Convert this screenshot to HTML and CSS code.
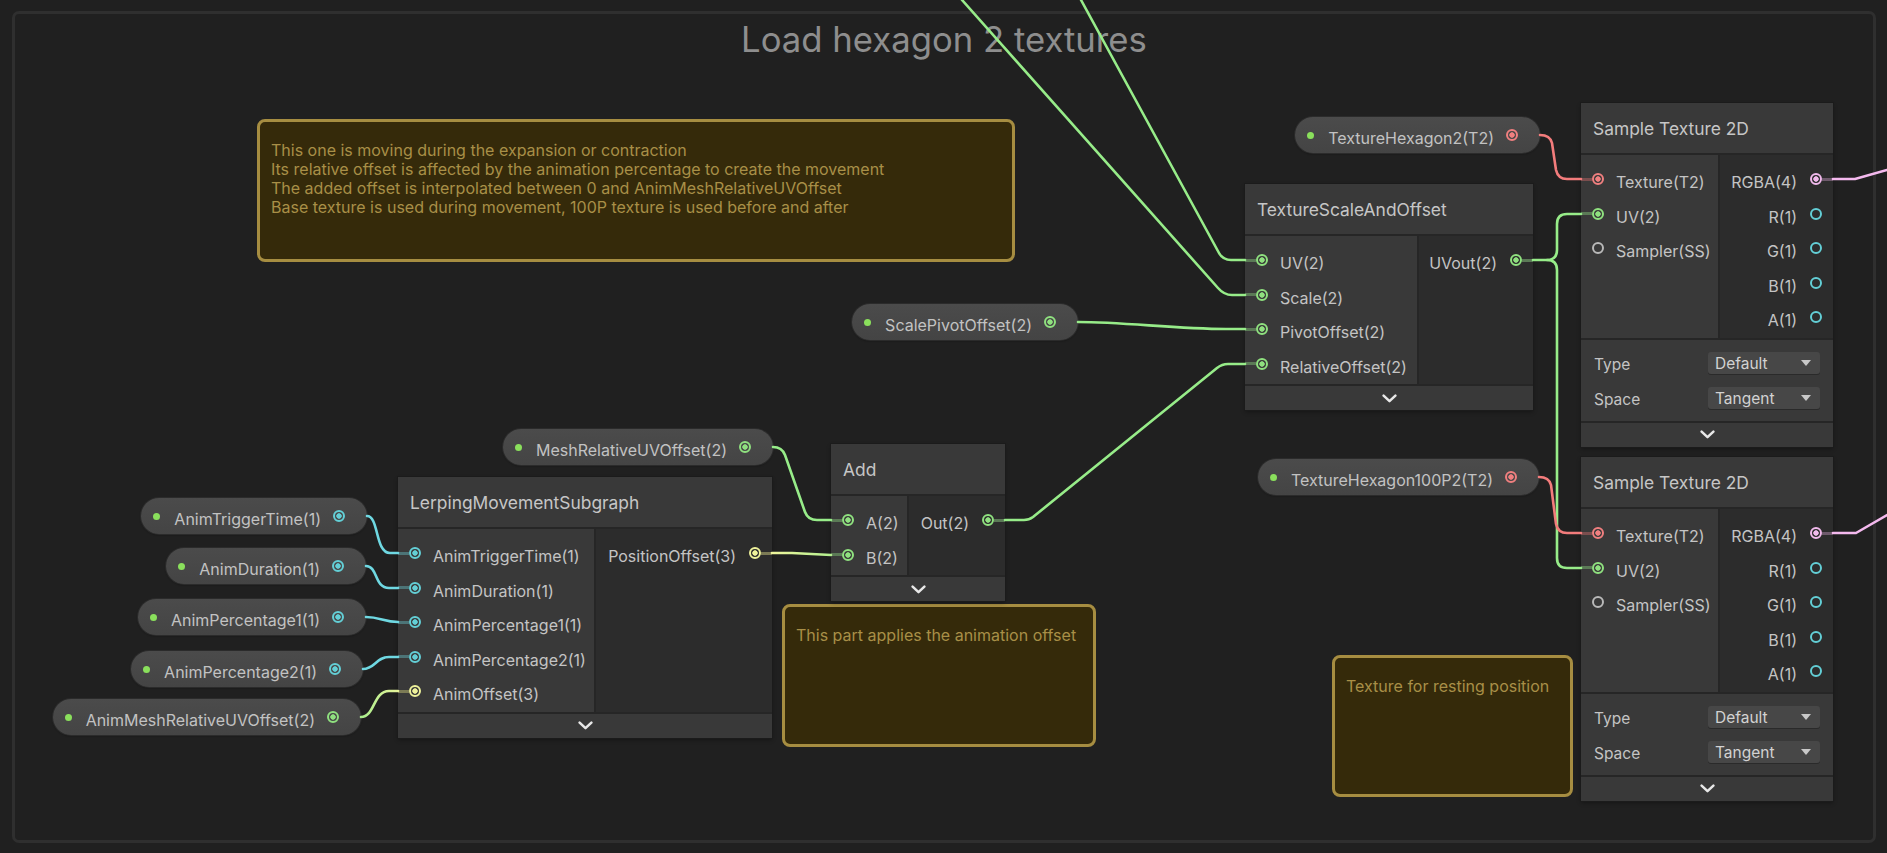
FILE: index.html
```html
<!DOCTYPE html>
<html>
<head>
<meta charset="utf-8">
<link rel="stylesheet" href="styles.css">
</head>
<body>
<div class="canvas">
  <div class="group">
    <div class="group-title">Load hexagon 2 textures</div>
  </div>

  <div class="note note-a">This one is moving during the expansion or contraction<br>Its relative offset is affected by the animation percentage to create the movement<br>The added offset is interpolated between 0 and AnimMeshRelativeUVOffset<br>Base texture is used during movement, 100P texture is used before and after</div>
  <div class="note note-b">This part applies the animation offset</div>
  <div class="note note-c">Texture for resting position</div>

  <!-- property pills -->
  <div class="pill p-th2"><span class="pdot"></span><span class="ptxt">TextureHexagon2(T2)</span><span class="ring on tex"></span></div>
  <div class="pill p-th100"><span class="pdot"></span><span class="ptxt">TextureHexagon100P2(T2)</span><span class="ring on tex"></span></div>
  <div class="pill p-spo"><span class="pdot"></span><span class="ptxt">ScalePivotOffset(2)</span><span class="ring on v2"></span></div>
  <div class="pill p-att"><span class="pdot"></span><span class="ptxt">AnimTriggerTime(1)</span><span class="ring on f1"></span></div>
  <div class="pill p-ad"><span class="pdot"></span><span class="ptxt">AnimDuration(1)</span><span class="ring on f1"></span></div>
  <div class="pill p-ap1"><span class="pdot"></span><span class="ptxt">AnimPercentage1(1)</span><span class="ring on f1"></span></div>
  <div class="pill p-ap2"><span class="pdot"></span><span class="ptxt">AnimPercentage2(1)</span><span class="ring on f1"></span></div>
  <div class="pill p-amr"><span class="pdot"></span><span class="ptxt">AnimMeshRelativeUVOffset(2)</span><span class="ring on v2"></span></div>
  <div class="pill p-mr"><span class="pdot"></span><span class="ptxt">MeshRelativeUVOffset(2)</span><span class="ring on v2"></span></div>

  <!-- TextureScaleAndOffset -->
  <div class="node n-tso">
    <div class="node-title">TextureScaleAndOffset</div>
    <div class="node-ports">
      <div class="inputs">
        <div class="row"><span class="ring on v2"></span><span class="lbl">UV(2)</span></div>
        <div class="row"><span class="ring on v2"></span><span class="lbl">Scale(2)</span></div>
        <div class="row"><span class="ring on v2"></span><span class="lbl">PivotOffset(2)</span></div>
        <div class="row"><span class="ring on v2"></span><span class="lbl">RelativeOffset(2)</span></div>
      </div>
      <div class="outputs">
        <div class="row"><span class="lbl">UVout(2)</span><span class="ring on v2"></span></div>
      </div>
    </div>
    <div class="node-footer"><svg class="chev" width="15" height="9" viewBox="0 0 15 9"><path d="M1.6 1.6 L7.5 7.2 L13.4 1.6"/></svg></div>
  </div>

  <!-- Sample Texture 2D (1) -->
  <div class="node n-st1">
    <div class="node-title">Sample Texture 2D</div>
    <div class="node-ports">
      <div class="inputs">
        <div class="row"><span class="ring on tex"></span><span class="lbl">Texture(T2)</span></div>
        <div class="row"><span class="ring on v2"></span><span class="lbl">UV(2)</span></div>
        <div class="row"><span class="ring ss"></span><span class="lbl">Sampler(SS)</span></div>
      </div>
      <div class="outputs">
        <div class="row"><span class="lbl">RGBA(4)</span><span class="ring on v4"></span></div>
        <div class="row"><span class="lbl">R(1)</span><span class="ring f1"></span></div>
        <div class="row"><span class="lbl">G(1)</span><span class="ring f1"></span></div>
        <div class="row"><span class="lbl">B(1)</span><span class="ring f1"></span></div>
        <div class="row"><span class="lbl">A(1)</span><span class="ring f1"></span></div>
      </div>
    </div>
    <div class="settings">
      <div class="set-row"><span class="set-lbl">Type</span><div class="dropdown"><span>Default</span><span class="tri"></span></div></div>
      <div class="set-row"><span class="set-lbl">Space</span><div class="dropdown"><span>Tangent</span><span class="tri"></span></div></div>
    </div>
    <div class="node-footer"><svg class="chev" width="15" height="9" viewBox="0 0 15 9"><path d="M1.6 1.6 L7.5 7.2 L13.4 1.6"/></svg></div>
  </div>

  <!-- Sample Texture 2D (2) -->
  <div class="node n-st2">
    <div class="node-title">Sample Texture 2D</div>
    <div class="node-ports">
      <div class="inputs">
        <div class="row"><span class="ring on tex"></span><span class="lbl">Texture(T2)</span></div>
        <div class="row"><span class="ring on v2"></span><span class="lbl">UV(2)</span></div>
        <div class="row"><span class="ring ss"></span><span class="lbl">Sampler(SS)</span></div>
      </div>
      <div class="outputs">
        <div class="row"><span class="lbl">RGBA(4)</span><span class="ring on v4"></span></div>
        <div class="row"><span class="lbl">R(1)</span><span class="ring f1"></span></div>
        <div class="row"><span class="lbl">G(1)</span><span class="ring f1"></span></div>
        <div class="row"><span class="lbl">B(1)</span><span class="ring f1"></span></div>
        <div class="row"><span class="lbl">A(1)</span><span class="ring f1"></span></div>
      </div>
    </div>
    <div class="settings">
      <div class="set-row"><span class="set-lbl">Type</span><div class="dropdown"><span>Default</span><span class="tri"></span></div></div>
      <div class="set-row"><span class="set-lbl">Space</span><div class="dropdown"><span>Tangent</span><span class="tri"></span></div></div>
    </div>
    <div class="node-footer"><svg class="chev" width="15" height="9" viewBox="0 0 15 9"><path d="M1.6 1.6 L7.5 7.2 L13.4 1.6"/></svg></div>
  </div>

  <!-- LerpingMovementSubgraph -->
  <div class="node n-lms">
    <div class="node-title">LerpingMovementSubgraph</div>
    <div class="node-ports">
      <div class="inputs">
        <div class="row"><span class="ring on f1"></span><span class="lbl">AnimTriggerTime(1)</span></div>
        <div class="row"><span class="ring on f1"></span><span class="lbl">AnimDuration(1)</span></div>
        <div class="row"><span class="ring on f1"></span><span class="lbl">AnimPercentage1(1)</span></div>
        <div class="row"><span class="ring on f1"></span><span class="lbl">AnimPercentage2(1)</span></div>
        <div class="row"><span class="ring on v3"></span><span class="lbl">AnimOffset(3)</span></div>
      </div>
      <div class="outputs">
        <div class="row"><span class="lbl">PositionOffset(3)</span><span class="ring on v3"></span></div>
      </div>
    </div>
    <div class="node-footer"><svg class="chev" width="15" height="9" viewBox="0 0 15 9"><path d="M1.6 1.6 L7.5 7.2 L13.4 1.6"/></svg></div>
  </div>

  <!-- Add -->
  <div class="node n-add">
    <div class="node-title">Add</div>
    <div class="node-ports">
      <div class="inputs">
        <div class="row"><span class="ring on v2"></span><span class="lbl">A(2)</span></div>
        <div class="row"><span class="ring on v2"></span><span class="lbl">B(2)</span></div>
      </div>
      <div class="outputs">
        <div class="row"><span class="lbl">Out(2)</span><span class="ring on v2"></span></div>
      </div>
    </div>
    <div class="node-footer"><svg class="chev" width="15" height="9" viewBox="0 0 15 9"><path d="M1.6 1.6 L7.5 7.2 L13.4 1.6"/></svg></div>
  </div>

  <!-- wires -->
  <svg class="wires" width="1887" height="853" viewBox="0 0 1887 853">
    <defs>
      <linearGradient id="gAmr" gradientUnits="userSpaceOnUse" x1="361" y1="0" x2="398" y2="0">
        <stop offset="0" stop-color="#a9ee8c"/>
        <stop offset="1" stop-color="#e6f49a"/>
      </linearGradient>
      <linearGradient id="gPos" gradientUnits="userSpaceOnUse" x1="772" y1="0" x2="831" y2="0">
        <stop offset="0" stop-color="#eef59c"/>
        <stop offset="1" stop-color="#b4f08f"/>
      </linearGradient>
    </defs>
    <g class="w-green">
      <path d="M962 0 L1218 288 Q1224 295 1232 295 L1245 295"/>
      <path d="M1081 0 L1219 253 Q1223 260 1231 260 L1245 260"/>
      <path d="M1078 322 C1125 322 1175 329 1226 329 L1245 329"/>
      <path d="M1005 520 L1024 520 Q1029 520 1033 517 L1217 368 Q1222 364 1228 364 L1245 364"/>
      <path d="M1533 260 L1547 260 Q1557 260 1557 250 L1557 224 Q1557 214 1567 214 L1581 214"/>
      <path d="M1547 260 Q1557 260 1557 270 L1557 558 Q1557 568 1567 568 L1581 568"/>
      <path d="M773 447 Q782 447 785 455 L805 512 Q808 520 817 520 L831 520"/>
    </g>
    <g class="w-red">
      <path d="M1540 135 Q1550 135 1552 143 L1556 170 Q1558 179 1567 179 L1581 179"/>
      <path d="M1539 477 Q1549 477 1551 485 L1556 524 Q1558 533 1567 533 L1581 533"/>
    </g>
    <g class="w-pink">
      <path d="M1833 179 L1855 179 L1887 170"/>
      <path d="M1833 533 L1856 533 L1887 515"/>
    </g>
    <g class="w-cyan">
      <path d="M367 516 C379 516 375 553 390 553 L398 553"/>
      <path d="M366 566 C378 566 374 588 389 588 L398 588"/>
      <path d="M366 617 C380 617 384 622 398 622"/>
      <path d="M363 669 C375 669 376 657 389 657 L398 657"/>
    </g>
    <path class="w-grad" stroke="url(#gAmr)" d="M361 717 C375 717 373 691 389 691 L398 691"/>
    <path class="w-grad" stroke="url(#gPos)" d="M772 553 L792 553 L831 555"/>
  </svg>
</div>
</body>
</html>
```

FILE: styles.css
```css
* { box-sizing: border-box; }

html, body {
  margin: 0;
  padding: 0;
  background: #202020;
}

.canvas {
  position: relative;
  width: 1887px;
  height: 853px;
  overflow: hidden;
  background: #202020;
  font-family: Inter, "Noto Sans", sans-serif;
}

/* group frame */
.group {
  position: absolute;
  left: 12px;
  top: 11px;
  width: 1864px;
  height: 832px;
  border: 3px solid #2f2f2f;
  border-radius: 7px;
}

.group-title {
  margin-top: 5px;
  text-align: center;
  font-size: 34.7px;
  line-height: 40px;
  color: #8e8e8e;
}

/* sticky notes */
.note {
  position: absolute;
  background: #352a0a;
  border: 3px solid #a68d41;
  border-radius: 8px;
  padding: 19px 11px;
  font-size: 16px;
  line-height: 19px;
  color: #a88f47;
  white-space: nowrap;
}
.note-a { left: 257px; top: 119px; width: 758px; height: 143px; }
.note-b { left: 782px; top: 604px; width: 314px; height: 143px; }
.note-c { left: 1332px; top: 655px; width: 241px; height: 142px; }

/* ports */
.ring {
  --c: #8fdf80;
  --d: #5c7a57;
  position: relative;
  flex: none;
  width: 12px;
  height: 12px;
  border: 2px solid var(--c);
  border-radius: 50%;
}
.ring.on {
  background: radial-gradient(circle at center, var(--c) 0 2.4px, transparent 3px);
}
.ring.v2 { --c: #8fe17f; --d: #5b7a56; }
.ring.f1 { --c: #63cfd6; --d: #4c7477; }
.ring.v3 { --c: #eef29a; --d: #7c7b55; }
.ring.v4 { --c: #f1b9ec; --d: #6e5a6c; }
.ring.tex { --c: #f07f7f; --d: #7a4e4e; }
.ring.ss { --c: #b9b9b9; }

.inputs .ring.on::before,
.outputs .ring.on::after {
  content: "";
  position: absolute;
  top: 50%;
  width: 11px;
  height: 3px;
  margin-top: -1.5px;
  background: var(--d);
}
.inputs .ring.on::before { right: calc(100% + 2px); }
.outputs .ring.on::after { left: calc(100% + 2px); }

/* pills */
.pill {
  position: absolute;
  height: 36px;
  display: flex;
  align-items: center;
  padding: 0 22px 0 12px;
  border-radius: 18px;
  background: linear-gradient(#4b4b4b, #444444);
  box-shadow: 0 0 0 1px #2b2b2b, 0 1px 2px rgba(0,0,0,0.45);
  font-size: 16px;
  color: #c2c2c2;
  white-space: nowrap;
}
.pdot {
  flex: none;
  width: 7px;
  height: 7px;
  border-radius: 50%;
  background: #8ae05c;
}
.ptxt {
  margin: 6px 12px 0 14px;
}
.p-th2  { right: 347px;  top: 117px; }
.p-th100{ right: 348px;  top: 459px; }
.p-spo  { right: 809px;  top: 304px; }
.p-att  { right: 1520px; top: 498px; }
.p-ad   { right: 1521px; top: 548px; }
.p-ap1  { right: 1521px; top: 599px; }
.p-ap2  { right: 1524px; top: 651px; }
.p-amr  { right: 1526px; top: 699px; }
.p-mr   { right: 1114px; top: 429px; }

/* nodes */
.node {
  position: absolute;
  background: #393939;
  box-shadow: 0 0 0 1px #1b1b1b, 0 2px 4px rgba(0,0,0,0.35);
  color: #c4c4c4;
  font-size: 16px;
  white-space: nowrap;
}
.node-title {
  height: 52px;
  display: flex;
  align-items: center;
  padding-left: 12px;
  border-bottom: 2px solid #262626;
  font-size: 17.4px;
  color: #c6c6c6;
}
.node-ports {
  display: flex;
  border-bottom: 2px solid #262626;
}
.inputs {
  flex: none;
  background: #393939;
  border-right: 2px solid #262626;
  padding: 7px 0 3px;
}
.outputs {
  flex: 1;
  background: #2c2c2c;
  padding: 7px 0 3px;
}
.row {
  height: 34.5px;
  display: flex;
  align-items: center;
  gap: 12px;
  padding-left: 11px;
}
.outputs .row {
  justify-content: flex-end;
  padding-left: 0;
  padding-right: 11px;
  gap: 13px;
}
.lbl {
  margin-top: 6px;
}
.node-footer {
  height: 24px;
  display: flex;
  align-items: center;
  justify-content: center;
}
.chev path {
  fill: none;
  stroke: #e8e8e8;
  stroke-width: 2.5;
  stroke-linecap: round;
  stroke-linejoin: round;
}

.settings {
  padding: 6px 13px 5px;
  border-bottom: 2px solid #262626;
  font-size: 15.5px;
}
.set-row {
  height: 35px;
  display: flex;
  align-items: center;
  justify-content: space-between;
}
.set-lbl { margin-top: 2px; }
.dropdown {
  width: 112px;
  height: 22px;
  display: flex;
  align-items: center;
  justify-content: space-between;
  padding: 0 9px 0 7px;
  background: #474747;
  border-radius: 3px;
  box-shadow: 0 1px 0 #2a2a2a;
  color: #d2d2d2;
}
.tri {
  width: 0;
  height: 0;
  border-left: 5px solid transparent;
  border-right: 5px solid transparent;
  border-top: 6px solid #c8c8c8;
}

.n-tso { left: 1245px; top: 184px; width: 288px; }
.n-tso .inputs { width: 174px; }
.n-st1 { left: 1581px; top: 103px; width: 252px; }
.n-st2 { left: 1581px; top: 457px; width: 252px; }
.n-st1 .inputs, .n-st2 .inputs { width: 139px; }
.n-lms { left: 398px; top: 477px; width: 374px; }
.n-lms .inputs { width: 198px; }
.n-add { left: 831px; top: 444px; width: 174px; }
.n-add .inputs { width: 78px; }

/* wires */
.wires {
  position: absolute;
  left: 0;
  top: 0;
  pointer-events: none;
}
.wires path {
  fill: none;
  stroke-width: 2.6;
  stroke-linecap: round;
  stroke-linejoin: round;
}
.w-green path { stroke: #97ec89; }
.w-red path { stroke: #f37c7c; }
.w-pink path { stroke: #f4b9ee; }
.w-cyan path { stroke: #6fd8e2; }
```
